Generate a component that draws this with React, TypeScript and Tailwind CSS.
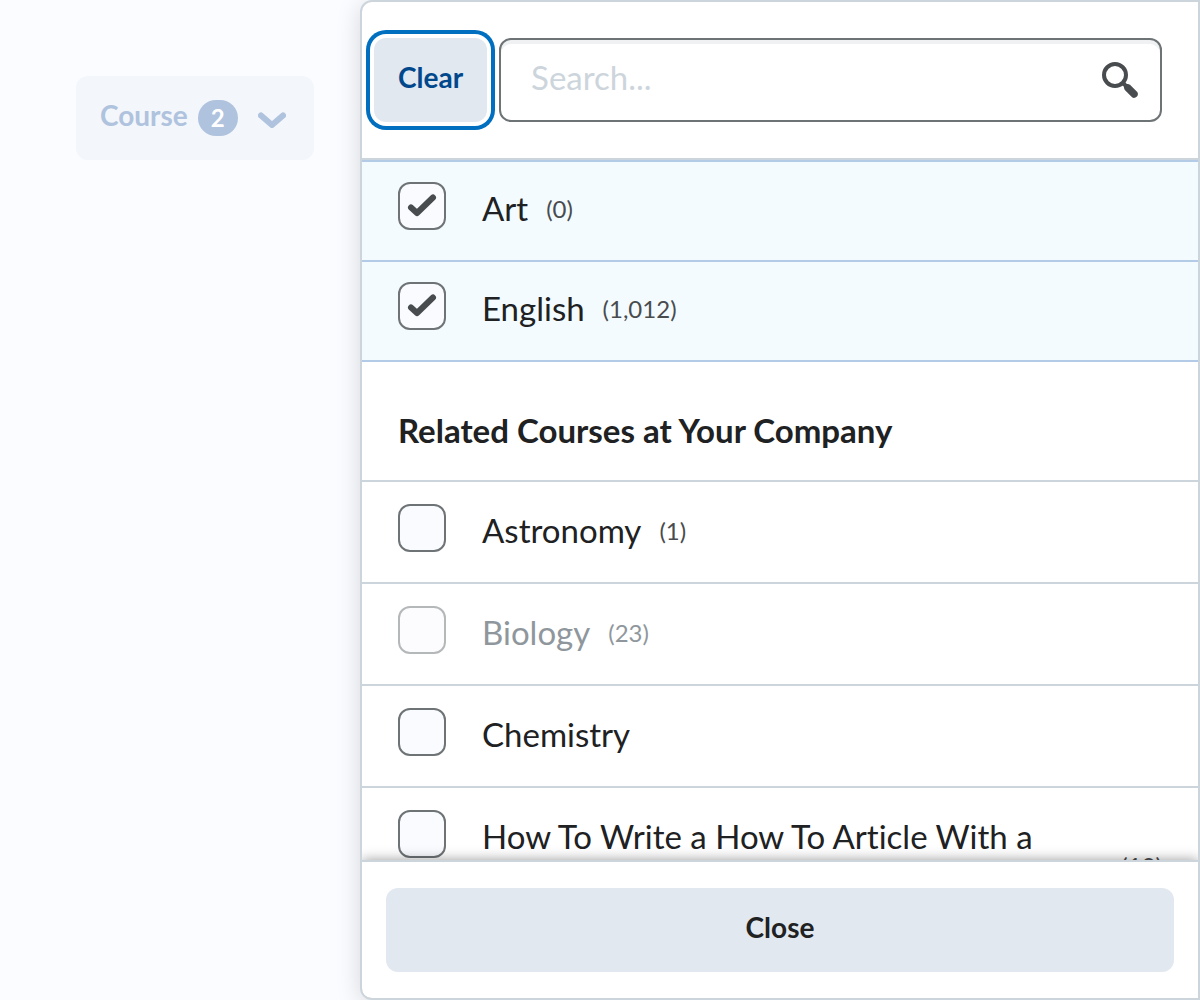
import { useState } from "react";

type Course = { name: string; count?: string; disabled?: boolean; multiline?: boolean };

const selectedCourses: Course[] = [
  { name: "Art", count: "(0)" },
  { name: "English", count: "(1,012)" },
];

const relatedCourses: Course[] = [
  { name: "Astronomy", count: "(1)" },
  { name: "Biology", count: "(23)", disabled: true },
  { name: "Chemistry" },
  { name: "How To Write a How To Article With a Flashy Title", count: "(10)", multiline: true },
];

function CheckIcon() {
  return (
    <svg viewBox="0 0 48 48" className="pointer-events-none col-start-1 row-start-1 size-12 fill-none stroke-[#494c4e]" aria-hidden="true">
      <path d="M13 25.5 L19 31 L35 15.5" strokeWidth="6" strokeLinecap="round" strokeLinejoin="round" />
    </svg>
  );
}

function CourseRow({ course, selected = false }: { course: Course; selected?: boolean }) {
  const [checked, setChecked] = useState(selected);
  return (
    <li className={selected ? "border-b-2 border-[#b4cbe8] bg-[#f3fbff]" : "border-b-2 border-[#cdd5dc]"}>
      <label className={selected ? "flex items-start px-9 pt-5 pb-7" : "flex items-start px-9 pt-[22px] pb-7"}>
        <span className="grid h-[50px] shrink-0">
          <input
            type="checkbox"
            checked={checked}
            disabled={course.disabled}
            onChange={(e) => setChecked(e.target.checked)}
            className="col-start-1 row-start-1 size-12 appearance-none rounded-xl border-2 border-[#6e7376] bg-[#fafbff] disabled:opacity-50"
          />
          {checked && <CheckIcon />}
        </span>
        <span className="mt-1 ml-9 flex min-w-0 items-start">
          <span className={course.disabled ? "text-[33px] leading-[44px] text-[#8f979d]" : "text-[33px] leading-[44px] text-[#202122]"}>{course.name}</span>
          {course.count && (
            <span className={`ml-[18px] self-center text-2xl leading-[46px] ${course.disabled ? "text-[#8f979d]" : "text-[#494c4e]"} ${course.multiline ? "pt-4" : ""}`}>
              {course.count}
            </span>
          )}
        </span>
      </label>
    </li>
  );
}

export default function App() {
  return (
    <main className="flex h-screen items-start overflow-hidden bg-[#fbfcff] font-['Lato',sans-serif] text-[#202122] [font-variant-ligatures:none]">
      <div className="w-[360px] shrink-0 py-19 pl-19">
        <button type="button" className="flex h-[84px] items-center rounded-xl bg-[#f3f6fa] pr-7 pl-6 text-[28px] font-bold text-[#afc3de]">
          <span className="pb-1.5">Course</span>
          <span className="ml-[10px] flex h-9 w-10 items-center justify-center rounded-[18px] bg-[#afc3de] text-2xl text-white">2</span>
          <svg viewBox="0 0 28 18" className="mt-1 ml-5 h-[18px] w-7 fill-none stroke-[#afc3de]" aria-hidden="true">
            <path d="M3 4.5 L14 14 L25 4.5" strokeWidth="6" strokeLinecap="round" strokeLinejoin="round" />
          </svg>
        </button>
      </div>

      <section className="flex h-full min-w-0 flex-1 flex-col overflow-hidden rounded-l-xl border-2 border-[#cdd5dc] bg-white shadow-[0_4px_24px_rgba(0,0,0,0.15)]">
        <div className="flex shrink-0 gap-3 border-b-2 border-[#cdd5dc] py-9 pr-9 pl-3">
          <button type="button" className="h-[84px] rounded-xl bg-[#e2e8f0] px-6 pb-1.5 text-[28px] font-bold text-[#00478c] ring-4 ring-[#006fbf] ring-offset-4 ring-offset-white">
            Clear
          </button>
          <div className="flex min-w-0 flex-1 items-center rounded-xl border-2 border-[#6e7376] bg-white pr-[22px] pl-[30px] shadow-[inset_0_4px_0_#eff1f2]">
            <input type="search" aria-label="Search" placeholder="Search..." className="min-w-0 flex-1 bg-transparent pb-1 text-[33px] outline-none placeholder:text-[#cdd5dc]" />
            <button type="button" aria-label="Search courses">
              <svg viewBox="0 0 36 36" className="size-9" aria-hidden="true">
                <circle cx="13" cy="13" r="11" fill="none" stroke="#494c4e" strokeWidth="4" />
                <path d="M20.5 20.5 L25 25" stroke="#494c4e" strokeWidth="4" />
                <path d="M22 26 C21.6 23.5 23.5 21.6 26 22 L28 22.8 L35 29.8 C38 32.8 33 38 29.8 35 L22.8 28 Z" fill="#494c4e" />
              </svg>
            </button>
          </div>
        </div>

        <div className="min-h-0 flex-1 overflow-y-auto [scrollbar-width:none]">
          <ul className="border-t-2 border-[#b4cbe8]">
            {selectedCourses.map((course) => (
              <CourseRow key={course.name} course={course} selected />
            ))}
          </ul>
          <h2 className="border-b-2 border-[#cdd5dc] px-9 pt-[46px] pb-7 text-[33px] leading-[44px] font-bold">Related Courses at Your Company</h2>
          <ul>
            {relatedCourses.map((course) => (
              <CourseRow key={course.name} course={course} />
            ))}
          </ul>
        </div>

        <div className="relative shrink-0 border-t-2 border-[#cdd5dc] bg-white px-6 py-[26px] shadow-[0_0_12px_rgba(0,0,0,0.4)]">
          <button type="button" className="h-[84px] w-full rounded-xl bg-[#e2e8f0] pb-1.5 text-[28px] font-bold">
            Close
          </button>
        </div>
      </section>
    </main>
  );
}
